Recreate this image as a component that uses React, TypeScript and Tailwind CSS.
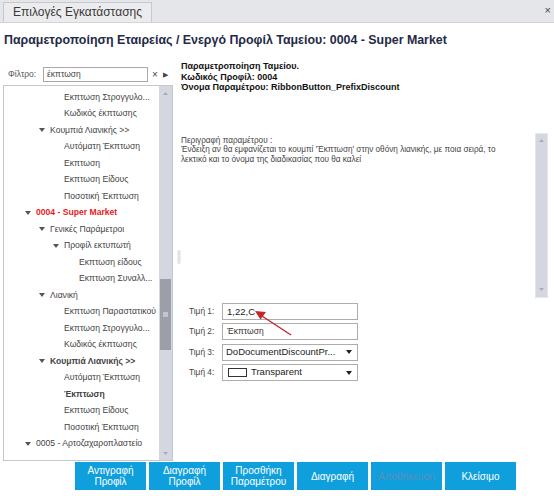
import React from "react";

type Row = { t: string; kind: "tri0" | "tri1" | "tri2" | "leaf2" | "leaf3"; bold?: boolean; red?: boolean };

const rows: Row[] = [
  { t: "Εκπτωση Στρογγυλο...", kind: "leaf2" },
  { t: "Κωδικός έκπτωσης", kind: "leaf2" },
  { t: "Κουμπιά Λιανικής >>", kind: "tri1" },
  { t: "Αυτόματη Έκπτωση", kind: "leaf2" },
  { t: "Εκπτωση", kind: "leaf2" },
  { t: "Εκπτωση Είδους", kind: "leaf2" },
  { t: "Ποσοτική Έκπτωση", kind: "leaf2" },
  { t: "0004 - Super Market", kind: "tri0", bold: true, red: true },
  { t: "Γενικές Παράμετροι", kind: "tri1" },
  { t: "Προφίλ εκτυπωτή", kind: "tri2" },
  { t: "Εκπτωση είδους", kind: "leaf3" },
  { t: "Εκπτωση Συναλλ...", kind: "leaf3" },
  { t: "Λιανική", kind: "tri1" },
  { t: "Εκπτωση Παραστατικού", kind: "leaf2" },
  { t: "Εκπτωση Στρογγυλο...", kind: "leaf2" },
  { t: "Κωδικός έκπτωσης", kind: "leaf2" },
  { t: "Κουμπιά Λιανικής >>", kind: "tri1", bold: true },
  { t: "Αυτόματη Έκπτωση", kind: "leaf2" },
  { t: "Έκπτωση", kind: "leaf2", bold: true },
  { t: "Εκπτωση Είδους", kind: "leaf2" },
  { t: "Ποσοτική Έκπτωση", kind: "leaf2" },
  { t: "0005 - Αρτοζαχαροπλαστείο", kind: "tri0" },
];

const padClass: Record<Row["kind"], string> = {
  tri0: "pl-[21px]",
  tri1: "pl-[35px]",
  tri2: "pl-[49px]",
  leaf2: "pl-[60px]",
  leaf3: "pl-[75px]",
};

function Tri({ className = "" }: { className?: string }) {
  return (
    <svg width="6" height="4" viewBox="0 0 6 4" className={className}>
      <path d="M0 0 L6 0 L3 4 Z" fill="#555" />
    </svg>
  );
}

function ScrollArrow({ up }: { up?: boolean }) {
  return (
    <div className="h-[14px] flex items-center justify-center">
      <svg width="5" height="3" viewBox="0 0 5 3">
        <path d={up ? "M0 3 L5 3 L2.5 0 Z" : "M0 0 L5 0 L2.5 3 Z"} fill="#a9acb4" />
      </svg>
    </div>
  );
}

function Btn({ a, b, disabled }: { a: string; b?: string; disabled?: boolean }) {
  return (
    <div
      className={`w-[71px] h-[28px] bg-[#0f9fdd] flex flex-col items-center justify-center text-[10px] leading-[11px] ${
        disabled ? "text-[#5a8fb9]" : "text-white"
      }`}
    >
      <span>{a}</span>
      {b && <span>{b}</span>}
    </div>
  );
}

export default function App() {
  return (
    <div className="relative w-[554px] h-[496px] overflow-hidden bg-white text-[#333] font-['Liberation_Sans',Arial,sans-serif]">
      {/* tab bar */}
      <div className="h-[23px] bg-[#e5e6ea] border-b border-[#d3d4d8] flex items-end justify-between pl-[3px] pr-[3px]">
        <div className="h-[20px] px-[9px] bg-[#ececee] border border-b-0 border-[#c8c9cc] text-[12px] leading-[19px] text-[#3a3a3a]">
          Επιλογές Εγκατάστασης
        </div>
        <div className="self-center text-[11px] text-[#444] leading-none mb-[1px]">×</div>
      </div>

      {/* title */}
      <div className="pt-[9px] pl-[4px] h-[41px] text-[12.4px] leading-[16px] font-bold text-[#1f2b47] whitespace-nowrap">
        Παραμετροποίηση Εταιρείας / Ενεργό Προφίλ Ταμείου: 0004 - Super Market
      </div>

      {/* main */}
      <div className="flex h-[398px]">
        {/* left */}
        <div className="w-[173px] pl-[3px] flex flex-col">
          <div className="h-[17px] mt-[2px] flex items-center">
            <span className="w-[40px] pl-[5px] text-[8.5px] text-[#555]">Φίλτρο:</span>
            <div className="h-[15px] w-[105px] border border-[#a9a9a9] bg-white text-[8.5px] leading-[13px] pl-[3px] text-[#444]">
              έκπτωση
            </div>
            <span className="ml-[4px] text-[10px] leading-none text-[#444]">×</span>
            <span className="ml-[5px] text-[7px] leading-none text-[#444]">▶</span>
          </div>
          <div className="mt-[2px] w-[170px] h-[376px] border border-[#c6c7ca] flex bg-white">
            <div className="flex-1 pt-[3px] overflow-hidden">
              {rows.map((r, i) => (
                <div
                  key={i}
                  className={`h-[16.5px] flex items-center whitespace-nowrap text-[8.6px] ${padClass[r.kind]} ${
                    r.red ? "text-[#e51b23]" : "text-[#444]"
                  } ${r.bold ? "font-bold" : ""}`}
                >
                  {r.kind.startsWith("tri") && <Tri className="mr-[5px] shrink-0" />}
                  <span>{r.t}</span>
                </div>
              ))}
            </div>
            <div className="w-[13px] bg-[#d4d7df] flex flex-col">
              <ScrollArrow up />
              <div className="h-[179px]" />
              <div className="h-[71px] mx-[1px] bg-[#9c9fa8] flex items-center justify-center">
                <div className="w-[5px] h-[5px] bg-[#c3c5cb]" />
              </div>
              <div className="flex-1" />
              <ScrollArrow />
            </div>
          </div>
        </div>

        {/* splitter */}
        <div className="w-[8px] pl-[4px] pt-[186px]">
          <div className="w-[4px] h-[14px] bg-[#e1e3e8] border border-[#eceef1]" />
        </div>

        {/* right */}
        <div className="w-[367px] flex flex-col">
          <div className="mt-[-3px] text-[9px] leading-[10.5px] font-bold text-[#111]">
            <div>Παραμετροποίηση Ταμείου.</div>
            <div>Κωδικός Προφίλ: 0004</div>
            <div>Όνομα Παραμέτρου: RibbonButton_PrefixDiscount</div>
          </div>
          <div className="mt-[40px] h-[165px] flex">
            <div className="flex-1 pt-[3px] text-[8.2px] leading-[9.6px] text-[#444] whitespace-nowrap">
              <div>Περιγραφή παραμέτρου :</div>
              <div>Ένδειξη αν θα εμφανίζεται το κουμπί 'Έκπτωση' στην οθόνη λιανικής, με ποια σειρά, το</div>
              <div>λεκτικό και το όνομα της διαδικασίας που θα καλεί</div>
            </div>
            <div className="w-[13px] bg-[#d4d7df] flex flex-col justify-between border border-[#e4e6ea]">
              <ScrollArrow up />
              <ScrollArrow />
            </div>
          </div>

          <div className="mt-[5px] flex flex-col gap-[3.5px] pl-[8px]">
            <div className="flex items-center h-[17px]">
              <span className="w-[33px] text-[8.3px] text-[#444]">Τιμή 1:</span>
              <div className="w-[136px] h-[17px] border border-[#adadad] pl-[4px] text-[9.5px] leading-[15px] text-[#222]">
                1,22,C
              </div>
            </div>
            <div className="flex items-center h-[17px]">
              <span className="w-[33px] text-[8.3px] text-[#444]">Τιμή 2:</span>
              <div className="w-[136px] h-[17px] border border-[#adadad] pl-[4px] text-[8.5px] leading-[15px] text-[#333]">
                Έκπτωση
              </div>
            </div>
            <div className="flex items-center h-[17px]">
              <span className="w-[33px] text-[8.3px] text-[#444]">Τιμή 3:</span>
              <div className="w-[136px] h-[17px] border border-[#adadad] pl-[3px] pr-[5px] flex items-center justify-between text-[9.5px] text-[#222]">
                <span>DoDocumentDiscountPr...</span>
                <svg width="6" height="4" viewBox="0 0 6 4">
                  <path d="M0 0 L6 0 L3 4 Z" fill="#222" />
                </svg>
              </div>
            </div>
            <div className="flex items-center h-[17px]">
              <span className="w-[33px] text-[8.3px] text-[#444]">Τιμή 4:</span>
              <div className="w-[136px] h-[17px] border border-[#adadad] pl-[5px] pr-[5px] flex items-center justify-between text-[9.5px] text-[#222]">
                <span className="flex items-center">
                  <span className="w-[19px] h-[9px] border border-[#333] bg-white mr-[4px]" />
                  Transparent
                </span>
                <svg width="6" height="4" viewBox="0 0 6 4">
                  <path d="M0 0 L6 0 L3 4 Z" fill="#222" />
                </svg>
              </div>
            </div>
          </div>
        </div>
      </div>

      {/* buttons */}
      <div className="pl-[75px] flex gap-[3px]">
        <Btn a="Αντιγραφή" b="Προφίλ" />
        <Btn a="Διαγραφή" b="Προφίλ" />
        <Btn a="Προσθήκη" b="Παραμέτρου" />
        <Btn a="Διαγραφή" />
        <Btn a="Αποθήκευση" disabled />
        <Btn a="Κλείσιμο" />
      </div>

      {/* red arrow overlay */}
      <svg className="absolute left-0 top-0 pointer-events-none" width="554" height="496" viewBox="0 0 554 496">
        <line x1="291" y1="335" x2="262" y2="316" stroke="#c3262b" strokeWidth="1.4" />
        <path d="M255 311 L266 312 L260.5 319.5 Z" fill="#c3262b" />
      </svg>
    </div>
  );
}
